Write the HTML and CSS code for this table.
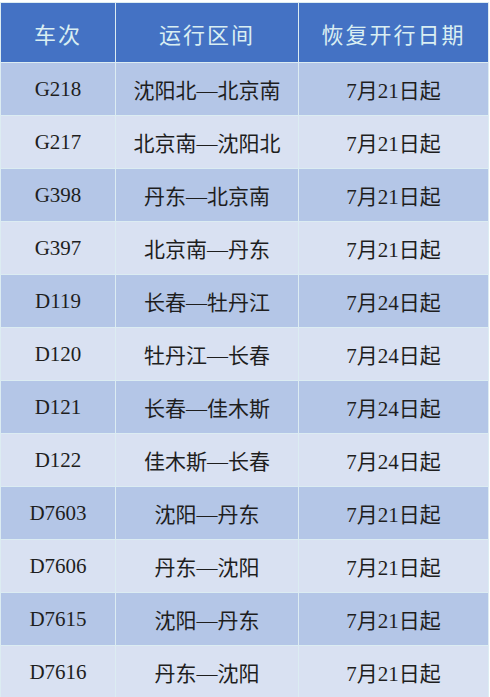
FILE: index.html
```html
<!DOCTYPE html>
<html lang="zh">
<head>
<meta charset="utf-8">
<link rel="stylesheet" href="styles.css">
</head>
<body>
<table class="tbl">
  <colgroup><col class="c1"><col class="c2"><col class="c3"></colgroup>
  <thead>
    <tr><th>车次</th><th>运行区间</th><th>恢复开行日期</th></tr>
  </thead>
  <tbody>
    <tr class="dark"><td>G218</td><td>沈阳北—北京南</td><td>7月21日起</td></tr>
    <tr class="light"><td>G217</td><td>北京南—沈阳北</td><td>7月21日起</td></tr>
    <tr class="dark"><td>G398</td><td>丹东—北京南</td><td>7月21日起</td></tr>
    <tr class="light"><td>G397</td><td>北京南—丹东</td><td>7月21日起</td></tr>
    <tr class="dark"><td>D119</td><td>长春—牡丹江</td><td>7月24日起</td></tr>
    <tr class="light"><td>D120</td><td>牡丹江—长春</td><td>7月24日起</td></tr>
    <tr class="dark"><td>D121</td><td>长春—佳木斯</td><td>7月24日起</td></tr>
    <tr class="light"><td>D122</td><td>佳木斯—长春</td><td>7月24日起</td></tr>
    <tr class="dark"><td>D7603</td><td>沈阳—丹东</td><td>7月21日起</td></tr>
    <tr class="light"><td>D7606</td><td>丹东—沈阳</td><td>7月21日起</td></tr>
    <tr class="dark"><td>D7615</td><td>沈阳—丹东</td><td>7月21日起</td></tr>
    <tr class="light"><td>D7616</td><td>丹东—沈阳</td><td>7月21日起</td></tr>
  </tbody>
</table>
</body>
</html>
```
FILE: styles.css
```css
html, body {
  margin: 0;
  padding: 0;
  background: #ffffff;
}
.tbl {
  width: 488px;
  margin-top: 2px;
  border-collapse: collapse;
  table-layout: fixed;
  font-family: "Liberation Serif", "Noto Sans CJK SC", serif;
}
.c1 { width: 115px; }
.c2 { width: 183px; }
.c3 { width: 190px; }
.tbl th, .tbl td {
  border: 1px solid #dcecf2;
  text-align: center;
  padding: 0;
}
.tbl th {
  height: 59px;
  background: #4472c4;
  color: #d9eef2;
  font-size: 22px;
  font-weight: normal;
  letter-spacing: 2px;
}
.tbl td {
  height: 52px;
  font-size: 21px;
  color: #1e1e1e;
}
.dark td { background: #b4c6e7; }
.light td { background: #d9e1f2; }
```
